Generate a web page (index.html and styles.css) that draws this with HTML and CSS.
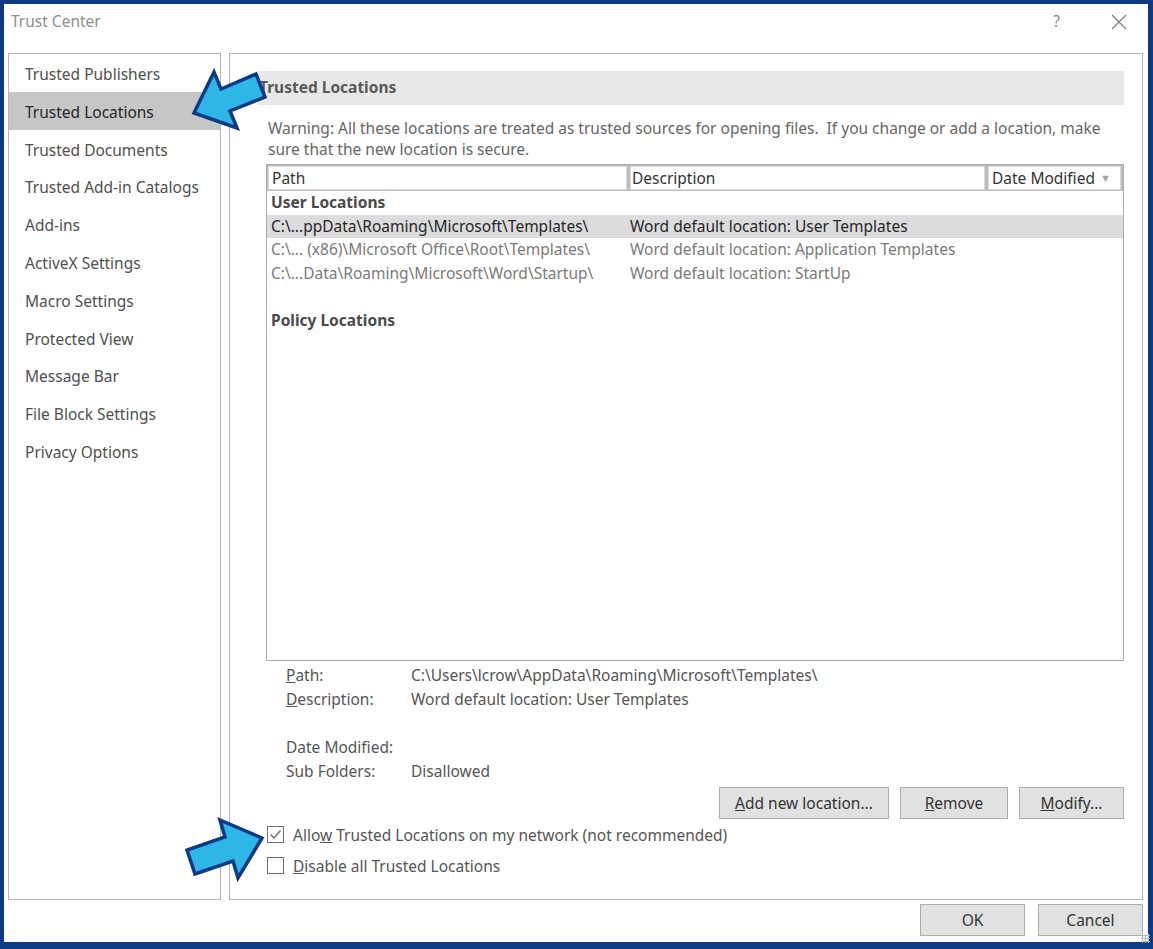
FILE: index.html
```html
<!DOCTYPE html>
<html lang="en">
<head>
    <meta charset="UTF-8">
    <title>Trust Center</title>
    <link rel="stylesheet" href="styles.css">
</head>
<body>
    <div class="dialog">
        <div class="titlebar">
            <span class="title">Trust Center</span>
            <div class="title-buttons">
                <span class="help">?</span>
                <svg class="close" width="16" height="16" viewBox="0 0 16 16">
                    <path d="M1 1 L15 15 M15 1 L1 15" stroke="#7a7a7a" stroke-width="1.2" fill="none"/>
                </svg>
            </div>
        </div>

        <div class="main">
            <ul class="nav">
                <li>Trusted Publishers</li>
                <li class="active">Trusted Locations</li>
                <li>Trusted Documents</li>
                <li>Trusted Add-in Catalogs</li>
                <li>Add-ins</li>
                <li>ActiveX Settings</li>
                <li>Macro Settings</li>
                <li>Protected View</li>
                <li>Message Bar</li>
                <li>File Block Settings</li>
                <li>Privacy Options</li>
            </ul>

            <div class="pane">
                <div class="pane-header">Trusted Locations</div>
                <p class="warning">Warning: All these locations are treated as trusted sources for opening files.&nbsp; If you change or add a location, make<br>sure that the new location is secure.</p>

                <div class="grid">
                    <div class="grid-head">
                        <div class="head-cell head-path">Path</div>
                        <div class="head-cell head-desc">Description</div>
                        <div class="head-cell head-date">Date Modified <span class="sort">&#9660;</span></div>
                    </div>
                    <div class="grid-body">
                        <div class="group">User Locations</div>
                        <div class="row selected">
                            <span class="cell-path">C:\...ppData\Roaming\Microsoft\Templates\</span>
                            <span class="cell-desc">Word default location: User Templates</span>
                        </div>
                        <div class="row">
                            <span class="cell-path">C:\... (x86)\Microsoft Office\Root\Templates\</span>
                            <span class="cell-desc">Word default location: Application Templates</span>
                        </div>
                        <div class="row">
                            <span class="cell-path">C:\...Data\Roaming\Microsoft\Word\Startup\</span>
                            <span class="cell-desc">Word default location: StartUp</span>
                        </div>
                        <div class="row"></div>
                        <div class="group">Policy Locations</div>
                    </div>
                </div>

                <div class="details">
                    <span class="label"><u>P</u>ath:</span>
                    <span class="value">C:\Users\lcrow\AppData\Roaming\Microsoft\Templates\</span>
                    <span class="label"><u>D</u>escription:</span>
                    <span class="value">Word default location: User Templates</span>
                    <span class="label"></span>
                    <span class="value"></span>
                    <span class="label">Date Modified:</span>
                    <span class="value"></span>
                    <span class="label">Sub Folders:</span>
                    <span class="value">Disallowed</span>
                </div>

                <div class="actions">
                    <button class="btn btn-add"><u>A</u>dd new location...</button>
                    <button class="btn btn-remove"><u>R</u>emove</button>
                    <button class="btn btn-modify"><u>M</u>odify...</button>
                </div>

                <label class="check">
                    <span class="box">
                        <svg width="15" height="15" viewBox="0 0 15 15">
                            <path d="M2.5 7.5 L6 11 L12.5 3.5" stroke="#707070" stroke-width="1.5" fill="none"/>
                        </svg>
                    </span>
                    <span>Allo<u>w</u> Trusted Locations on my network (not recommended)</span>
                </label>
                <label class="check">
                    <span class="box"></span>
                    <span><u>D</u>isable all Trusted Locations</span>
                </label>
            </div>
        </div>

        <div class="footer">
            <button class="btn btn-ok">OK</button>
            <button class="btn btn-cancel">Cancel</button>
        </div>
        <div class="grip"></div>
    </div>

    <!-- callout arrows drawn over the dialog -->
    <svg class="callouts" width="1153" height="949" viewBox="0 0 1153 949">
        <polygon points="194,113 214,72 221,89 256,74 265,97 230,111 237,128"
                 fill="#2fb6e9" stroke="#0c3a85" stroke-width="3.5" stroke-linejoin="miter"/>
        <polygon points="262,838 220,820 225,837 187,850 195,874 233,861 238,878"
                 fill="#2fb6e9" stroke="#0c3a85" stroke-width="3.5" stroke-linejoin="miter"/>
    </svg>
</body>
</html>
```

FILE: styles.css
```css
* {
    margin: 0;
    padding: 0;
    box-sizing: border-box;
}

body {
    width: 1153px;
    height: 949px;
    background-color: #0c3a85;
    padding: 4px 5px 7px 4px;
    font-family: "Noto Sans", "Open Sans", sans-serif;
    font-size: 15.5px;
    color: #444;
    position: relative;
    overflow: hidden;
}

.dialog {
    position: relative;
    height: 100%;
    background-color: #ffffff;
    display: flex;
    flex-direction: column;
}

/* title bar */
.titlebar {
    height: 49px;
    display: flex;
    justify-content: space-between;
    padding: 6px 0 0 7px;
}

.title {
    color: #8e8e8e;
    line-height: 22px;
}

.title-buttons {
    display: flex;
    align-items: flex-start;
    padding-right: 21px;
}

.help {
    color: #8a8a8a;
    line-height: 22px;
    margin-right: 51px;
}

.close {
    margin-top: 4px;
}

/* main area */
.main {
    height: 847px;
    display: flex;
    gap: 8px;
    padding: 0 5px 0 4px;
}

.nav {
    list-style: none;
    width: 213px;
    border: 1px solid #b4b4b4;
}

.nav li {
    height: 37.8px;
    line-height: 36px;
    padding: 2px 0 0 16px;
    color: #505050;
    white-space: nowrap;
}

.nav li.active {
    background-color: #c6c6c6;
    color: #262626;
}

.pane {
    flex: 1;
    border: 1px solid #b4b4b4;
    padding: 17px 18px 0 28px;
}

.pane-header {
    height: 34px;
    line-height: 32px;
    background-color: #e8e8e8;
    font-weight: bold;
    color: #595959;
    padding-left: 1px;
}

.warning {
    margin: 13px 0 0 10px;
    line-height: 21px;
    color: #666;
    white-space: nowrap;
}

/* locations list */
.grid {
    margin: 4px 0 0 8px;
    height: 497px;
    border: 1px solid #ababab;
}

.grid-head {
    display: flex;
    height: 26px;
    background-color: #bdbdbd;
    padding: 1px 2px 1px 1px;
    gap: 3px;
}

.head-cell {
    background-color: #ffffff;
    border: 1px solid #d9d9d9;
    line-height: 22px;
    padding-left: 3px;
    color: #333;
    white-space: nowrap;
}

.head-path {
    width: 359px;
}

.head-desc {
    width: 355px;
    padding-left: 1px;
}

.head-date {
    flex: 1;
}

.sort {
    font-size: 11px;
    color: #a6a6a6;
    vertical-align: 2px;
    margin-left: 1px;
}

.group,
.row {
    height: 23.7px;
    line-height: 23.7px;
    white-space: nowrap;
}

.group {
    font-weight: bold;
    color: #4a4a4a;
    padding-left: 4px;
}

.row {
    display: flex;
    color: #7a7a7a;
}

.row.selected {
    background-color: #dcdcdf;
    color: #262626;
}

.cell-path {
    width: 363px;
    padding-left: 4px;
}

/* selected location details */
.details {
    display: grid;
    grid-template-columns: 125px 1fr;
    grid-auto-rows: 24px;
    line-height: 24px;
    margin-top: 2px;
    padding-left: 28px;
    color: #555;
    white-space: nowrap;
}

.actions {
    display: flex;
    justify-content: flex-end;
    gap: 11px;
    margin-top: 4px;
}

.btn {
    height: 32px;
    font-family: inherit;
    font-size: 15.5px;
    color: #333;
    background-color: #e1e1e1;
    border: 1px solid #adadad;
}

.btn-add {
    width: 170px;
}

.btn-remove {
    width: 108px;
}

.btn-modify {
    width: 105px;
}

.check {
    display: flex;
    align-items: center;
    gap: 9px;
    height: 31px;
    margin-left: 9px;
    color: #555;
}

.box {
    width: 17px;
    height: 17px;
    border: 1px solid #6e6e6e;
    display: flex;
    align-items: center;
    justify-content: center;
}

/* dialog buttons */
.footer {
    display: flex;
    justify-content: flex-end;
    gap: 13px;
    padding: 4px 5px 0 0;
}

.btn-ok,
.btn-cancel {
    width: 105px;
}

.grip {
    position: absolute;
    right: -2px;
    bottom: -1px;
    width: 9px;
    height: 9px;
    background-image: radial-gradient(circle, #b8b8b8 1px, transparent 1.2px);
    background-size: 3px 3px;
}

.callouts {
    position: absolute;
    top: 0;
    left: 0;
    pointer-events: none;
}
```
